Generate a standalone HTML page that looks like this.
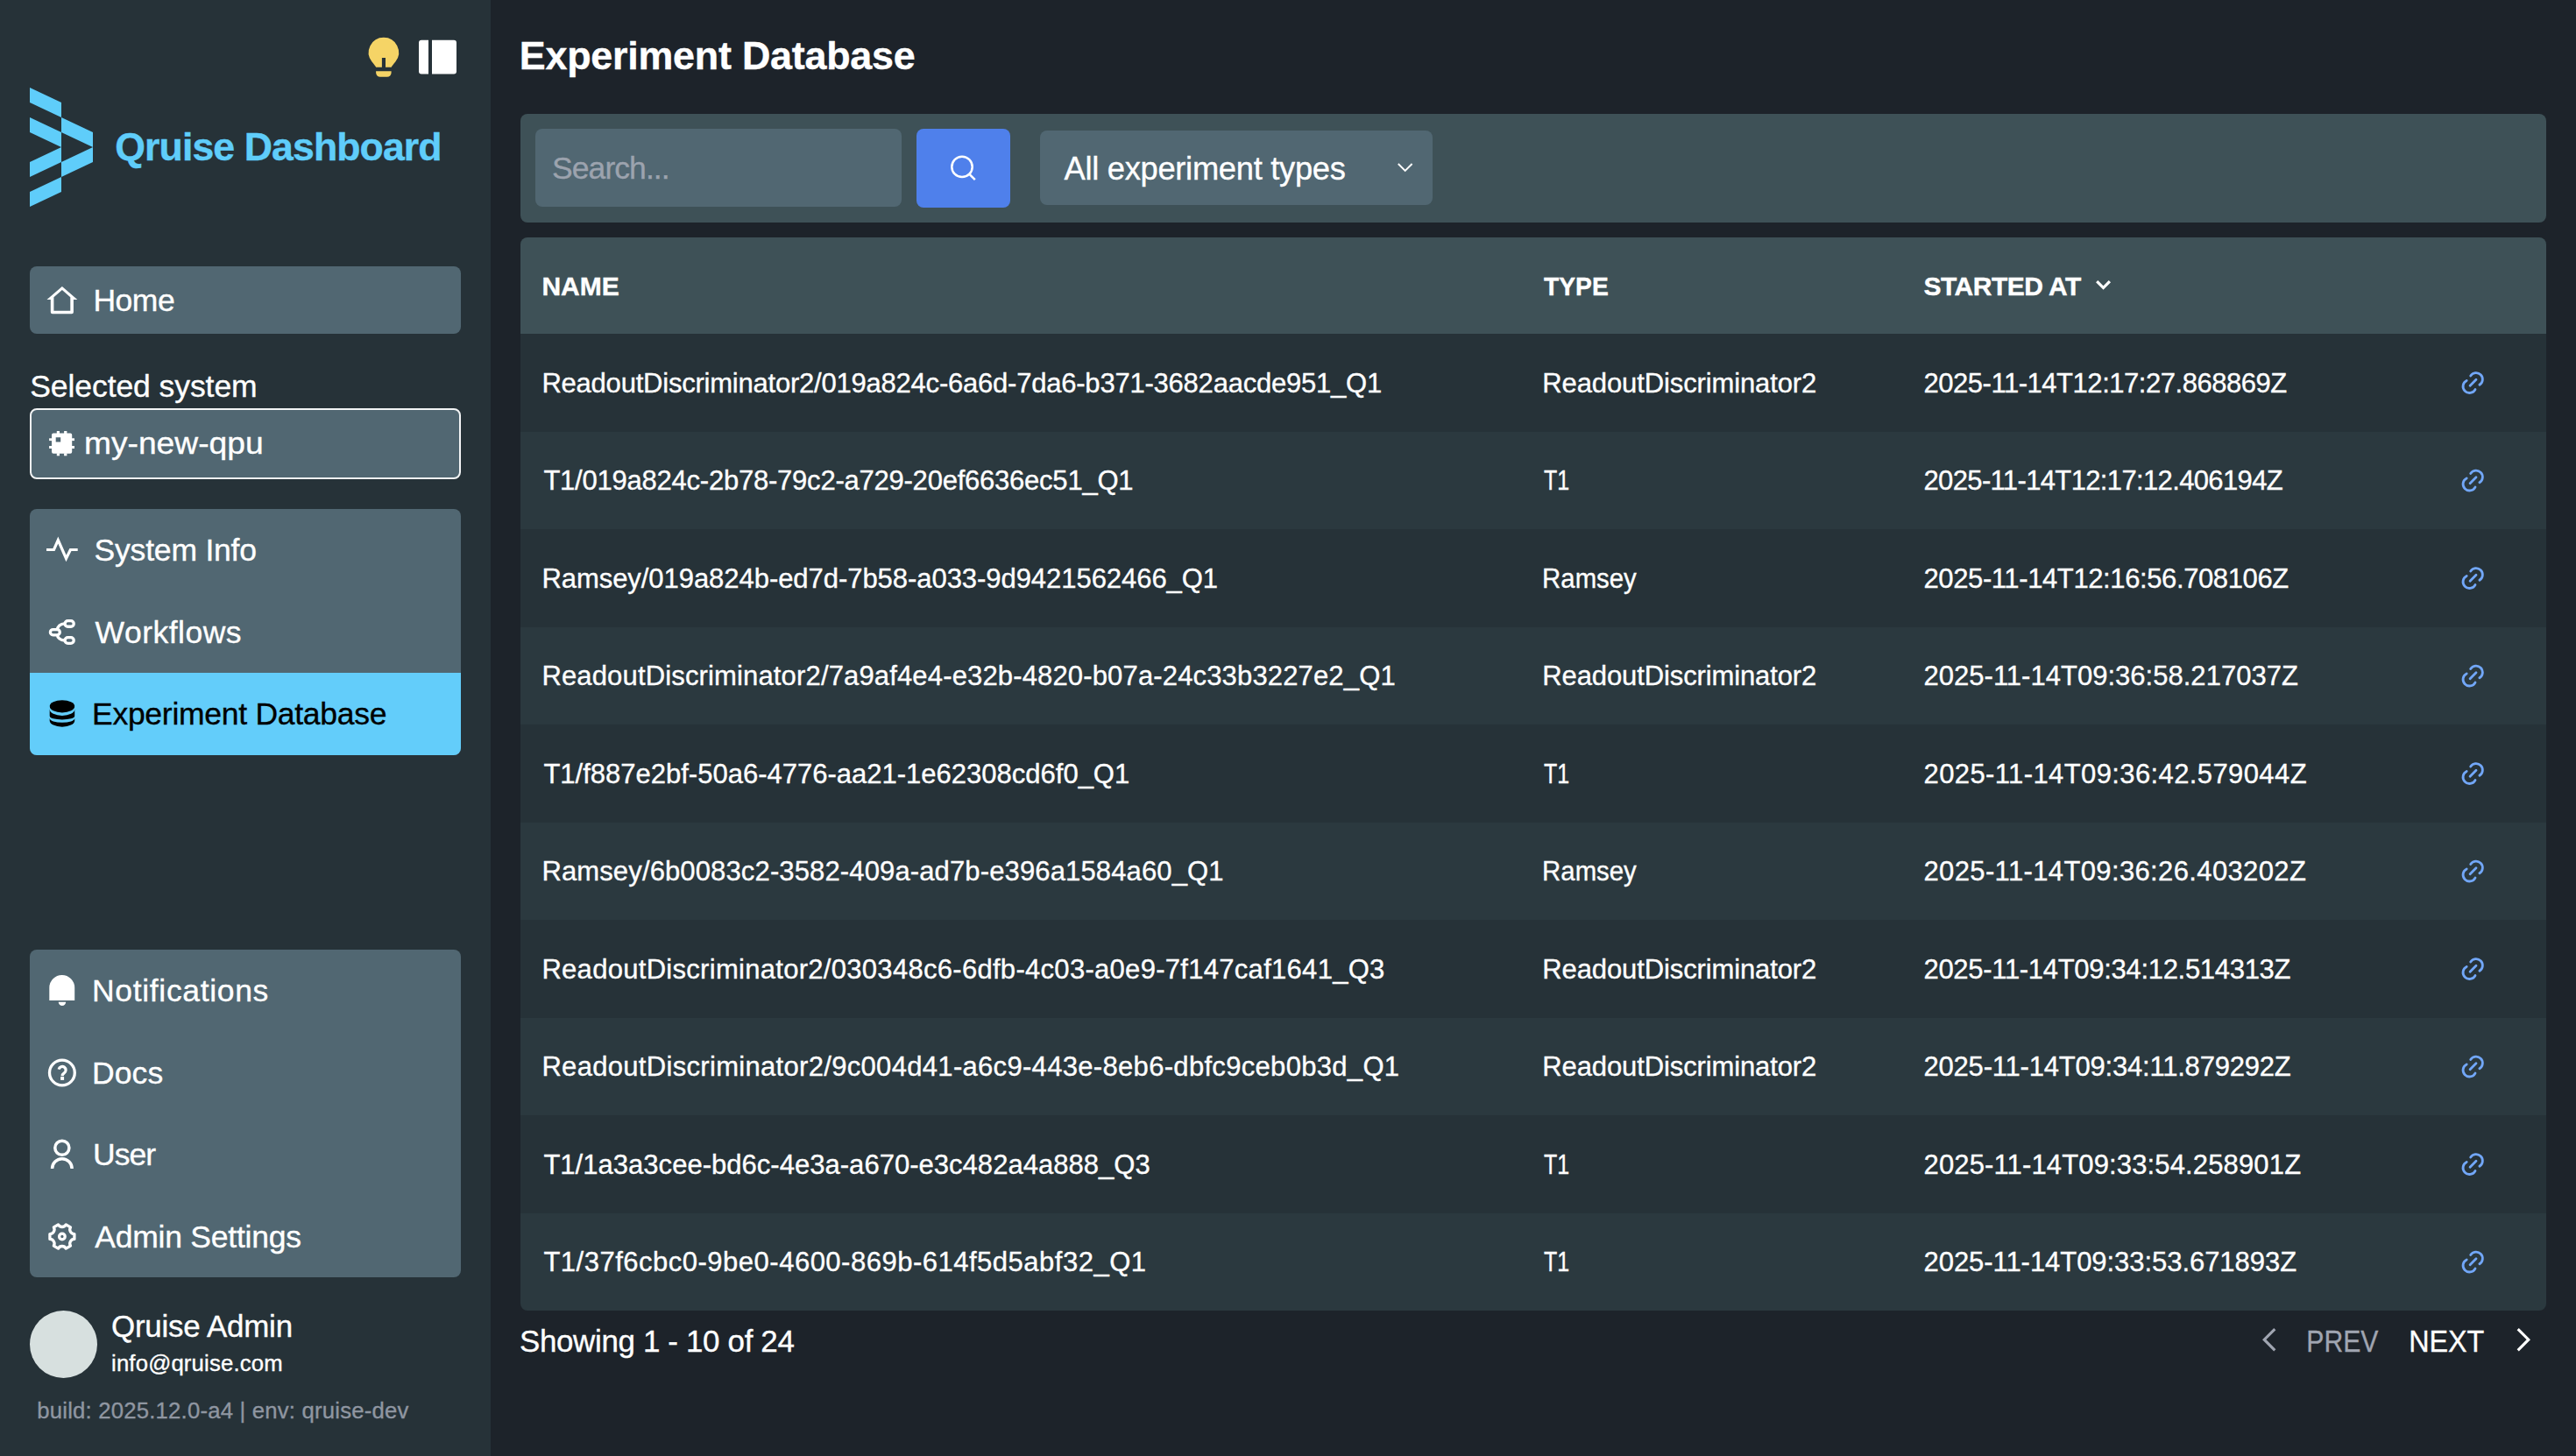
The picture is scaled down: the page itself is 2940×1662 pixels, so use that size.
<!DOCTYPE html>
<html><head><meta charset="utf-8"><style>
html,body{margin:0;padding:0;width:2940px;height:1662px;overflow:hidden;background:#1d232a;font-family:"Liberation Sans", sans-serif;}
</style></head><body>
<div id="root" style="position:relative;width:2940px;height:1662px;overflow:hidden;">
<div style="position:absolute;left:0px;top:0px;width:2940px;height:1662px;background:#1d232a;border-radius:0px;"></div>
<div style="position:absolute;left:0px;top:0px;width:560px;height:1662px;background:#263238;border-radius:0px;"></div>
<svg style="position:absolute;left:0;top:0" width="560" height="260" viewBox="0 0 560 260">
<path fill="#f5d466" d="M437.9,42.7 a17.1,17.1 0 0 1 13.6,27.5 c-2.2,2.9 -4.6,5.4 -4.9,6.6 H440 V66 h-4.1 v10.8 H429.2 c-0.4,-1.2 -2.7,-3.7 -4.9,-6.6 A17.1,17.1 0 0 1 437.9,42.7 z M429.1,81.2 h17.5 v1.8 a4.8,4.8 0 0 1 -4.8,4.8 h-7.9 a4.8,4.8 0 0 1 -4.8,-4.8 z"/>
<path fill="#fff" d="M481,45.8 h8 v38.8 h-8 a3,3 0 0 1 -3,-3 v-32.8 a3,3 0 0 1 3,-3 z M493,45.8 h25 a3,3 0 0 1 3,3 v32.8 a3,3 0 0 1 -3,3 h-25 z"/>
<g fill="#5fcdfa" transform="translate(34,100)">
<path d="M0,0 L36,17 L36,34 L0,17 Z"/>
<path d="M0,34 L36,51 L36,68 L0,51 Z"/>
<path d="M0,85 L36,68 L36,85 L0,102 Z"/>
<path d="M0,119 L36,102 L36,119 L0,136 Z"/>
<path d="M36,34 L72,51 L72,68 L36,51 Z"/>
<path d="M36,85 L72,68 L72,85 L36,102 Z"/>
</g>
</svg>
<div style="position:absolute;left:131.30px;top:146px;font-size:44.6px;line-height:44.6px;font-weight:700;letter-spacing:-0.887px;color:#5fcdfa;white-space:nowrap;-webkit-text-stroke:0.4px #5fcdfa;">Qruise Dashboard</div>
<div style="position:absolute;left:34px;top:304px;width:492px;height:77px;background:#516772;border-radius:8px;"></div>
<svg style="position:absolute;left:0;top:300" width="120" height="80" viewBox="0 300 120 80">
<path fill="#fff" fill-rule="evenodd" d="M70.9,326.9 L88.3,342 H83.9 V356.3 a2,2 0 0 1 -2,2 H59.8 a2,2 0 0 1 -2,-2 V342 H53.5 Z M70.9,330.9 L61.4,339.2 V354.7 H80.3 V339.2 Z"/>
</svg>
<div style="position:absolute;left:106.40px;top:326px;font-size:35.5px;line-height:35.5px;font-weight:400;letter-spacing:-0.467px;color:#fff;white-space:nowrap;-webkit-text-stroke:0.35px #fff;">Home</div>
<div style="position:absolute;left:34.20px;top:424px;font-size:35.5px;line-height:35.5px;font-weight:400;letter-spacing:-0.071px;color:#fff;white-space:nowrap;-webkit-text-stroke:0.35px #fff;">Selected system</div>
<div style="position:absolute;left:34px;top:466px;width:492px;height:81px;background:#516772;border-radius:8px;box-sizing:border-box;border:2px solid #f2f4f5;"></div>
<svg style="position:absolute;left:0;top:480" width="100" height="50" viewBox="0 480 100 50">
<g fill="#fff">
<path fill-rule="evenodd" d="M61,494.6 H80.2 a2,2 0 0 1 2,2 V515.7 a2,2 0 0 1 -2,2 H61 a2,2 0 0 1 -2,-2 V496.6 a2,2 0 0 1 2,-2 z M63.7,499.2 V504.6 H69.2 V499.2 Z"/>
<rect x="64.8" y="492" width="3.2" height="3"/><rect x="73.1" y="492" width="3.3" height="3"/>
<rect x="64.8" y="517.3" width="3.2" height="3"/><rect x="73.1" y="517.3" width="3.3" height="3"/>
<rect x="56.1" y="500.3" width="3.3" height="2.8"/><rect x="56.1" y="509" width="3.3" height="3"/>
<rect x="81.8" y="500.3" width="3.2" height="2.8"/><rect x="81.8" y="509" width="3.2" height="3"/>
</g></svg>
<div style="position:absolute;left:95.90px;top:489px;font-size:35.5px;line-height:35.5px;font-weight:400;letter-spacing:0.000px;color:#fff;white-space:nowrap;-webkit-text-stroke:0.35px #fff;transform:scaleX(1.0482);transform-origin:2px 0;">my-new-qpu</div>
<div style="position:absolute;left:34px;top:581px;width:492px;height:281px;background:#516772;border-radius:8px;overflow:hidden;"></div>
<div style="position:absolute;left:34px;top:768px;width:492px;height:94px;background:#63cdfa;border-radius:0px;border-radius:0 0 8px 8px;"></div>
<svg style="position:absolute;left:0;top:590" width="100" height="260" viewBox="0 590 100 260">
<path fill="none" stroke="#fff" stroke-width="3.2" stroke-linejoin="miter" stroke-miterlimit="10" d="M53,627.5 H61.5 L66.3,616.5 L75.5,637.5 L80.4,627.5 H88.7"/>
<g stroke="#fff" stroke-width="3.3">
<path fill="none" d="M75,711.9 H73.6 A8.2,7.4 0 0 0 65.4,719.3 M65.4,724.2 A8.2,6.8 0 0 0 73.6,731 H75"/>
<g fill="#516772">
<rect x="74.1" y="708.7" width="10.1" height="6.55" rx="3.27"/>
<rect x="57.4" y="718.6" width="10.9" height="6.2" rx="3.1"/>
<rect x="74.1" y="727.7" width="10.1" height="6.6" rx="3.3"/>
</g></g>
<path fill="#000" d="M56.7,806.3 A14.25,7.1 0 0 1 85.2,806.3 V822.6 A14.25,7.1 0 0 1 56.7,822.6 Z"/>
<g fill="#63cdfa">
<path d="M56.7,806.3 A14.25,7.1 0 0 0 85.2,806.3 H86 V809.8 H85.2 A14.25,7.1 0 0 1 56.7,809.8 H55.9 V806.3 Z"/>
<path d="M56.7,817.6 A14.25,3.9 0 0 0 85.2,817.6 H86 V820 H85.2 A14.25,4.8 0 0 1 56.7,820 H55.9 V817.6 Z"/>
</g>
</svg>
<div style="position:absolute;left:107.60px;top:611px;font-size:35.5px;line-height:35.5px;font-weight:400;letter-spacing:-0.200px;color:#fff;white-space:nowrap;-webkit-text-stroke:0.35px #fff;">System Info</div>
<div style="position:absolute;left:108.60px;top:705px;font-size:35.5px;line-height:35.5px;font-weight:400;letter-spacing:0.488px;color:#fff;white-space:nowrap;-webkit-text-stroke:0.35px #fff;">Workflows</div>
<div style="position:absolute;left:105.00px;top:798px;font-size:35.5px;line-height:35.5px;font-weight:400;letter-spacing:-0.272px;color:#000;white-space:nowrap;-webkit-text-stroke:0.35px #000;">Experiment Database</div>
<div style="position:absolute;left:34px;top:1084px;width:492px;height:374px;background:#516772;border-radius:8px;"></div>
<svg style="position:absolute;left:0;top:1100" width="100" height="340" viewBox="0 1100 100 340">
<path fill="#fff" d="M56.3,1127.5 A14.45,14.45 0 0 1 85.2,1127.5 V1141.9 H56.3 Z M66.7,1143.8 H75.2 A4.25,4.2 0 0 1 66.7,1143.8 Z"/>
<g fill="none" stroke="#fff" stroke-width="3.3">
<circle cx="70.9" cy="1224.5" r="14.4"/>
<path stroke-width="3.2" d="M67.1,1220.6 A4.05,4.05 0 1 1 73.2,1224.9 C71.9,1225.8 71.1,1226.5 71.1,1228.2"/>
</g>
<rect x="69.1" y="1229.1" width="4" height="3.8" fill="#fff"/>
<g fill="none" stroke="#fff" stroke-width="3.5">
<circle cx="70.85" cy="1310.3" r="8.05"/>
<path d="M59.55,1334 A11.3,11.3 0 0 1 82.15,1334"/>
</g>
<g fill="none" stroke="#fff" stroke-width="3.3" stroke-linejoin="round">
<path d="M84.89,1408.53 L84.89,1414.47 A5.06,5.06 0 0 0 80.47,1422.13 L80.47,1422.13 L75.32,1425.10 A5.06,5.06 0 0 0 66.48,1425.10 L66.48,1425.10 L61.33,1422.13 A5.06,5.06 0 0 0 56.91,1414.47 L56.91,1414.47 L56.91,1408.53 A5.06,5.06 0 0 0 61.33,1400.87 L61.33,1400.87 L66.48,1397.90 A5.06,5.06 0 0 0 75.32,1397.90 L75.32,1397.90 L80.47,1400.87 A5.06,5.06 0 0 0 84.89,1408.53 Z"/>
<circle cx="70.9" cy="1411.5" r="3.3"/>
</g>
</svg>
<div style="position:absolute;left:105.00px;top:1114px;font-size:35.5px;line-height:35.5px;font-weight:400;letter-spacing:0.667px;color:#fff;white-space:nowrap;-webkit-text-stroke:0.35px #fff;">Notifications</div>
<div style="position:absolute;left:105.00px;top:1208px;font-size:35.5px;line-height:35.5px;font-weight:400;letter-spacing:0.100px;color:#fff;white-space:nowrap;-webkit-text-stroke:0.35px #fff;">Docs</div>
<div style="position:absolute;left:106.00px;top:1301px;font-size:35.5px;line-height:35.5px;font-weight:400;letter-spacing:-1.000px;color:#fff;white-space:nowrap;-webkit-text-stroke:0.35px #fff;">User</div>
<div style="position:absolute;left:108.30px;top:1395px;font-size:35.5px;line-height:35.5px;font-weight:400;letter-spacing:-0.238px;color:#fff;white-space:nowrap;-webkit-text-stroke:0.35px #fff;">Admin Settings</div>
<svg style="position:absolute;left:34px;top:1496px" width="77" height="77"><circle cx="38.5" cy="38.5" r="38.5" fill="#d7e0df"/></svg>
<div style="position:absolute;left:127.00px;top:1497px;font-size:34.9px;line-height:34.9px;font-weight:400;letter-spacing:-0.218px;color:#fff;white-space:nowrap;-webkit-text-stroke:0.35px #fff;">Qruise Admin</div>
<div style="position:absolute;left:127.00px;top:1544px;font-size:25.7px;line-height:25.7px;font-weight:400;letter-spacing:0.179px;color:#fff;white-space:nowrap;-webkit-text-stroke:0.35px #fff;">info@qruise.com</div>
<div style="position:absolute;left:42.30px;top:1598px;font-size:25.7px;line-height:25.7px;font-weight:400;letter-spacing:0.208px;color:#8f96a1;white-space:nowrap;-webkit-text-stroke:0.35px #8f96a1;">build: 2025.12.0-a4 | env: qruise-dev</div>
<div style="position:absolute;left:592.80px;top:41px;font-size:44.8px;line-height:44.8px;font-weight:700;letter-spacing:-0.211px;color:#fff;white-space:nowrap;-webkit-text-stroke:0.4px #fff;">Experiment Database</div>
<div style="position:absolute;left:594px;top:130px;width:2312px;height:124px;background:#3e5157;border-radius:8px;"></div>
<div style="position:absolute;left:611px;top:147px;width:418px;height:89px;background:#516772;border-radius:8px;"></div>
<div style="position:absolute;left:630.00px;top:175px;font-size:35.5px;line-height:35.5px;font-weight:400;letter-spacing:-0.925px;color:#9ca3ae;white-space:nowrap;-webkit-text-stroke:0.35px #9ca3ae;">Search...</div>
<div style="position:absolute;left:1046px;top:147px;width:107px;height:90px;background:#4f80eb;border-radius:8px;"></div>
<div style="position:absolute;left:1187px;top:149px;width:448px;height:85px;background:#516772;border-radius:8px;"></div>
<div style="position:absolute;left:1214.50px;top:175px;font-size:36.3px;line-height:36.3px;font-weight:400;letter-spacing:-0.289px;color:#fff;white-space:nowrap;-webkit-text-stroke:0.35px #fff;">All experiment types</div>
<svg style="position:absolute;left:1040px;top:140px" width="620" height="110" viewBox="1040 140 620 110">
<g fill="none" stroke="#fff">
<circle cx="1098" cy="190.4" r="11.7" stroke-width="2.5"/>
<path d="M1106.4,198.8 L1112.8,205.2" stroke-width="2.5"/>
<path d="M1595.8,187 L1603.7,195 L1611.6,187" stroke-width="1.9"/>
</g></svg>
<div style="position:absolute;left:594px;top:271px;width:2312px;height:1225px;border-radius:8px;overflow:hidden;">
<div style="position:absolute;left:0px;top:0px;width:2312px;height:110px;background:#3e5157;border-radius:0px;"></div>
<div style="position:absolute;left:0px;top:110.0px;width:2312px;height:111.5px;background:#263238;border-radius:0px;"></div>
<div style="position:absolute;left:0px;top:221.5px;width:2312px;height:111.5px;background:#2b393f;border-radius:0px;"></div>
<div style="position:absolute;left:0px;top:333.0px;width:2312px;height:111.5px;background:#263238;border-radius:0px;"></div>
<div style="position:absolute;left:0px;top:444.5px;width:2312px;height:111.5px;background:#2b393f;border-radius:0px;"></div>
<div style="position:absolute;left:0px;top:556.0px;width:2312px;height:111.5px;background:#263238;border-radius:0px;"></div>
<div style="position:absolute;left:0px;top:667.5px;width:2312px;height:111.5px;background:#2b393f;border-radius:0px;"></div>
<div style="position:absolute;left:0px;top:779.0px;width:2312px;height:111.5px;background:#263238;border-radius:0px;"></div>
<div style="position:absolute;left:0px;top:890.5px;width:2312px;height:111.5px;background:#2b393f;border-radius:0px;"></div>
<div style="position:absolute;left:0px;top:1002.0px;width:2312px;height:111.5px;background:#263238;border-radius:0px;"></div>
<div style="position:absolute;left:0px;top:1113.5px;width:2312px;height:111.5px;background:#2b393f;border-radius:0px;"></div>
</div>
<div style="position:absolute;left:618.40px;top:312px;font-size:30px;line-height:30px;font-weight:700;letter-spacing:0.000px;color:#fff;white-space:nowrap;-webkit-text-stroke:0.4px #fff;">NAME</div>
<div style="position:absolute;left:1762.30px;top:312px;font-size:30px;line-height:30px;font-weight:700;letter-spacing:0.000px;color:#fff;white-space:nowrap;-webkit-text-stroke:0.4px #fff;transform:scaleX(0.9410);transform-origin:0px 0;">TYPE</div>
<div style="position:absolute;left:2195.50px;top:312px;font-size:30px;line-height:30px;font-weight:700;letter-spacing:-0.511px;color:#fff;white-space:nowrap;-webkit-text-stroke:0.4px #fff;">STARTED AT</div>
<div style="position:absolute;left:618.40px;top:422px;font-size:31px;line-height:31px;font-weight:400;letter-spacing:-0.220px;color:#fff;white-space:nowrap;-webkit-text-stroke:0.35px #fff;">ReadoutDiscriminator2/019a824c-6a6d-7da6-b371-3682aacde951_Q1</div>
<div style="position:absolute;left:1760.30px;top:422px;font-size:31px;line-height:31px;font-weight:400;letter-spacing:-0.115px;color:#fff;white-space:nowrap;-webkit-text-stroke:0.35px #fff;">ReadoutDiscriminator2</div>
<div style="position:absolute;left:2195.50px;top:422px;font-size:31px;line-height:31px;font-weight:400;letter-spacing:-0.465px;color:#fff;white-space:nowrap;-webkit-text-stroke:0.35px #fff;">2025-11-14T12:17:27.868869Z</div>
<div style="position:absolute;left:620.40px;top:533px;font-size:31px;line-height:31px;font-weight:400;letter-spacing:-0.229px;color:#fff;white-space:nowrap;-webkit-text-stroke:0.35px #fff;">T1/019a824c-2b78-79c2-a729-20ef6636ec51_Q1</div>
<div style="position:absolute;left:1762.30px;top:533px;font-size:31px;line-height:31px;font-weight:400;letter-spacing:0.000px;color:#fff;white-space:nowrap;-webkit-text-stroke:0.35px #fff;transform:scaleX(0.8057);transform-origin:0px 0;">T1</div>
<div style="position:absolute;left:2195.50px;top:533px;font-size:31px;line-height:31px;font-weight:400;letter-spacing:-0.642px;color:#fff;white-space:nowrap;-webkit-text-stroke:0.35px #fff;">2025-11-14T12:17:12.406194Z</div>
<div style="position:absolute;left:618.40px;top:645px;font-size:31px;line-height:31px;font-weight:400;letter-spacing:-0.049px;color:#fff;white-space:nowrap;-webkit-text-stroke:0.35px #fff;">Ramsey/019a824b-ed7d-7b58-a033-9d9421562466_Q1</div>
<div style="position:absolute;left:1760.30px;top:645px;font-size:31px;line-height:31px;font-weight:400;letter-spacing:0.000px;color:#fff;white-space:nowrap;-webkit-text-stroke:0.35px #fff;transform:scaleX(0.9473);transform-origin:2px 0;">Ramsey</div>
<div style="position:absolute;left:2195.50px;top:645px;font-size:31px;line-height:31px;font-weight:400;letter-spacing:-0.392px;color:#fff;white-space:nowrap;-webkit-text-stroke:0.35px #fff;">2025-11-14T12:16:56.708106Z</div>
<div style="position:absolute;left:618.40px;top:756px;font-size:31px;line-height:31px;font-weight:400;letter-spacing:0.152px;color:#fff;white-space:nowrap;-webkit-text-stroke:0.35px #fff;">ReadoutDiscriminator2/7a9af4e4-e32b-4820-b07a-24c33b3227e2_Q1</div>
<div style="position:absolute;left:1760.30px;top:756px;font-size:31px;line-height:31px;font-weight:400;letter-spacing:-0.115px;color:#fff;white-space:nowrap;-webkit-text-stroke:0.35px #fff;">ReadoutDiscriminator2</div>
<div style="position:absolute;left:2195.50px;top:756px;font-size:31px;line-height:31px;font-weight:400;letter-spacing:0.019px;color:#fff;white-space:nowrap;-webkit-text-stroke:0.35px #fff;">2025-11-14T09:36:58.217037Z</div>
<div style="position:absolute;left:620.40px;top:868px;font-size:31px;line-height:31px;font-weight:400;letter-spacing:0.002px;color:#fff;white-space:nowrap;-webkit-text-stroke:0.35px #fff;">T1/f887e2bf-50a6-4776-aa21-1e62308cd6f0_Q1</div>
<div style="position:absolute;left:1762.30px;top:868px;font-size:31px;line-height:31px;font-weight:400;letter-spacing:0.000px;color:#fff;white-space:nowrap;-webkit-text-stroke:0.35px #fff;transform:scaleX(0.8057);transform-origin:0px 0;">T1</div>
<div style="position:absolute;left:2195.50px;top:868px;font-size:31px;line-height:31px;font-weight:400;letter-spacing:0.392px;color:#fff;white-space:nowrap;-webkit-text-stroke:0.35px #fff;">2025-11-14T09:36:42.579044Z</div>
<div style="position:absolute;left:618.40px;top:979px;font-size:31px;line-height:31px;font-weight:400;letter-spacing:0.133px;color:#fff;white-space:nowrap;-webkit-text-stroke:0.35px #fff;">Ramsey/6b0083c2-3582-409a-ad7b-e396a1584a60_Q1</div>
<div style="position:absolute;left:1760.30px;top:979px;font-size:31px;line-height:31px;font-weight:400;letter-spacing:0.000px;color:#fff;white-space:nowrap;-webkit-text-stroke:0.35px #fff;transform:scaleX(0.9473);transform-origin:2px 0;">Ramsey</div>
<div style="position:absolute;left:2195.50px;top:979px;font-size:31px;line-height:31px;font-weight:400;letter-spacing:0.365px;color:#fff;white-space:nowrap;-webkit-text-stroke:0.35px #fff;">2025-11-14T09:36:26.403202Z</div>
<div style="position:absolute;left:618.40px;top:1091px;font-size:31px;line-height:31px;font-weight:400;letter-spacing:0.293px;color:#fff;white-space:nowrap;-webkit-text-stroke:0.35px #fff;">ReadoutDiscriminator2/030348c6-6dfb-4c03-a0e9-7f147caf1641_Q3</div>
<div style="position:absolute;left:1760.30px;top:1091px;font-size:31px;line-height:31px;font-weight:400;letter-spacing:-0.115px;color:#fff;white-space:nowrap;-webkit-text-stroke:0.35px #fff;">ReadoutDiscriminator2</div>
<div style="position:absolute;left:2195.50px;top:1091px;font-size:31px;line-height:31px;font-weight:400;letter-spacing:-0.304px;color:#fff;white-space:nowrap;-webkit-text-stroke:0.35px #fff;">2025-11-14T09:34:12.514313Z</div>
<div style="position:absolute;left:618.40px;top:1202px;font-size:31px;line-height:31px;font-weight:400;letter-spacing:0.313px;color:#fff;white-space:nowrap;-webkit-text-stroke:0.35px #fff;">ReadoutDiscriminator2/9c004d41-a6c9-443e-8eb6-dbfc9ceb0b3d_Q1</div>
<div style="position:absolute;left:1760.30px;top:1202px;font-size:31px;line-height:31px;font-weight:400;letter-spacing:-0.115px;color:#fff;white-space:nowrap;-webkit-text-stroke:0.35px #fff;">ReadoutDiscriminator2</div>
<div style="position:absolute;left:2195.50px;top:1202px;font-size:31px;line-height:31px;font-weight:400;letter-spacing:-0.204px;color:#fff;white-space:nowrap;-webkit-text-stroke:0.35px #fff;">2025-11-14T09:34:11.879292Z</div>
<div style="position:absolute;left:620.40px;top:1314px;font-size:31px;line-height:31px;font-weight:400;letter-spacing:0.027px;color:#fff;white-space:nowrap;-webkit-text-stroke:0.35px #fff;">T1/1a3a3cee-bd6c-4e3a-a670-e3c482a4a888_Q3</div>
<div style="position:absolute;left:1762.30px;top:1314px;font-size:31px;line-height:31px;font-weight:400;letter-spacing:0.000px;color:#fff;white-space:nowrap;-webkit-text-stroke:0.35px #fff;transform:scaleX(0.8057);transform-origin:0px 0;">T1</div>
<div style="position:absolute;left:2195.50px;top:1314px;font-size:31px;line-height:31px;font-weight:400;letter-spacing:0.142px;color:#fff;white-space:nowrap;-webkit-text-stroke:0.35px #fff;">2025-11-14T09:33:54.258901Z</div>
<div style="position:absolute;left:620.40px;top:1425px;font-size:31px;line-height:31px;font-weight:400;letter-spacing:0.502px;color:#fff;white-space:nowrap;-webkit-text-stroke:0.35px #fff;">T1/37f6cbc0-9be0-4600-869b-614f5d5abf32_Q1</div>
<div style="position:absolute;left:1762.30px;top:1425px;font-size:31px;line-height:31px;font-weight:400;letter-spacing:0.000px;color:#fff;white-space:nowrap;-webkit-text-stroke:0.35px #fff;transform:scaleX(0.8057);transform-origin:0px 0;">T1</div>
<div style="position:absolute;left:2195.50px;top:1425px;font-size:31px;line-height:31px;font-weight:400;letter-spacing:-0.050px;color:#fff;white-space:nowrap;-webkit-text-stroke:0.35px #fff;">2025-11-14T09:33:53.671893Z</div>
<svg style="position:absolute;left:0;top:0" width="2940" height="1662" viewBox="0 0 2940 1662">
<path d="M2393.2,321.2 L2400.55,328.6 L2407.9,321.2" fill="none" stroke="#fff" stroke-width="3.2"/>
<g fill="none" stroke="#72a7f8" stroke-width="2.8" stroke-linecap="round"><g transform="translate(0,0.25)"><path d="M2819.7,428.8 A7.4,7.4 0 1 1 2829.9,439"/><path d="M2815.2,434.2 A7.4,7.4 0 1 0 2825.0,444.3"/><path d="M2819.1,440.1 L2826,433"/></g><g transform="translate(0,111.75)"><path d="M2819.7,428.8 A7.4,7.4 0 1 1 2829.9,439"/><path d="M2815.2,434.2 A7.4,7.4 0 1 0 2825.0,444.3"/><path d="M2819.1,440.1 L2826,433"/></g><g transform="translate(0,223.25)"><path d="M2819.7,428.8 A7.4,7.4 0 1 1 2829.9,439"/><path d="M2815.2,434.2 A7.4,7.4 0 1 0 2825.0,444.3"/><path d="M2819.1,440.1 L2826,433"/></g><g transform="translate(0,334.75)"><path d="M2819.7,428.8 A7.4,7.4 0 1 1 2829.9,439"/><path d="M2815.2,434.2 A7.4,7.4 0 1 0 2825.0,444.3"/><path d="M2819.1,440.1 L2826,433"/></g><g transform="translate(0,446.25)"><path d="M2819.7,428.8 A7.4,7.4 0 1 1 2829.9,439"/><path d="M2815.2,434.2 A7.4,7.4 0 1 0 2825.0,444.3"/><path d="M2819.1,440.1 L2826,433"/></g><g transform="translate(0,557.75)"><path d="M2819.7,428.8 A7.4,7.4 0 1 1 2829.9,439"/><path d="M2815.2,434.2 A7.4,7.4 0 1 0 2825.0,444.3"/><path d="M2819.1,440.1 L2826,433"/></g><g transform="translate(0,669.25)"><path d="M2819.7,428.8 A7.4,7.4 0 1 1 2829.9,439"/><path d="M2815.2,434.2 A7.4,7.4 0 1 0 2825.0,444.3"/><path d="M2819.1,440.1 L2826,433"/></g><g transform="translate(0,780.75)"><path d="M2819.7,428.8 A7.4,7.4 0 1 1 2829.9,439"/><path d="M2815.2,434.2 A7.4,7.4 0 1 0 2825.0,444.3"/><path d="M2819.1,440.1 L2826,433"/></g><g transform="translate(0,892.25)"><path d="M2819.7,428.8 A7.4,7.4 0 1 1 2829.9,439"/><path d="M2815.2,434.2 A7.4,7.4 0 1 0 2825.0,444.3"/><path d="M2819.1,440.1 L2826,433"/></g><g transform="translate(0,1003.75)"><path d="M2819.7,428.8 A7.4,7.4 0 1 1 2829.9,439"/><path d="M2815.2,434.2 A7.4,7.4 0 1 0 2825.0,444.3"/><path d="M2819.1,440.1 L2826,433"/></g></g>
<path d="M2596.3,1517.1 L2584.2,1529.2 L2596.3,1541.3" fill="none" stroke="#a0a5b1" stroke-width="3.1"/>
<path d="M2873.7,1517.1 L2885.8,1529.2 L2873.7,1541.3" fill="none" stroke="#fff" stroke-width="3.1"/>
</svg>
<div style="position:absolute;left:593.00px;top:1514px;font-size:34.9px;line-height:34.9px;font-weight:400;letter-spacing:-0.326px;color:#fff;white-space:nowrap;-webkit-text-stroke:0.35px #fff;">Showing 1 - 10 of 24</div>
<div style="position:absolute;left:2632.00px;top:1513px;font-size:35px;line-height:35px;font-weight:400;letter-spacing:0.000px;color:#a0a5b1;white-space:nowrap;-webkit-text-stroke:0.35px #a0a5b1;transform:scaleX(0.8617);transform-origin:2px 0;">PREV</div>
<div style="position:absolute;left:2749.00px;top:1513px;font-size:35px;line-height:35px;font-weight:400;letter-spacing:0.000px;color:#fff;white-space:nowrap;-webkit-text-stroke:0.35px #fff;transform:scaleX(0.9231);transform-origin:2px 0;">NEXT</div>
</div>
<script>(function(){var w=window.innerWidth||2940;var s=w/2940;if(Math.abs(s-1)>0.02){var r=document.getElementById('root');r.style.transformOrigin='0 0';r.style.transform='scale('+s+')';document.body.style.width=w+'px';document.body.style.height=(1662*s)+'px';document.documentElement.style.width=w+'px';}})();</script>
</body></html>
